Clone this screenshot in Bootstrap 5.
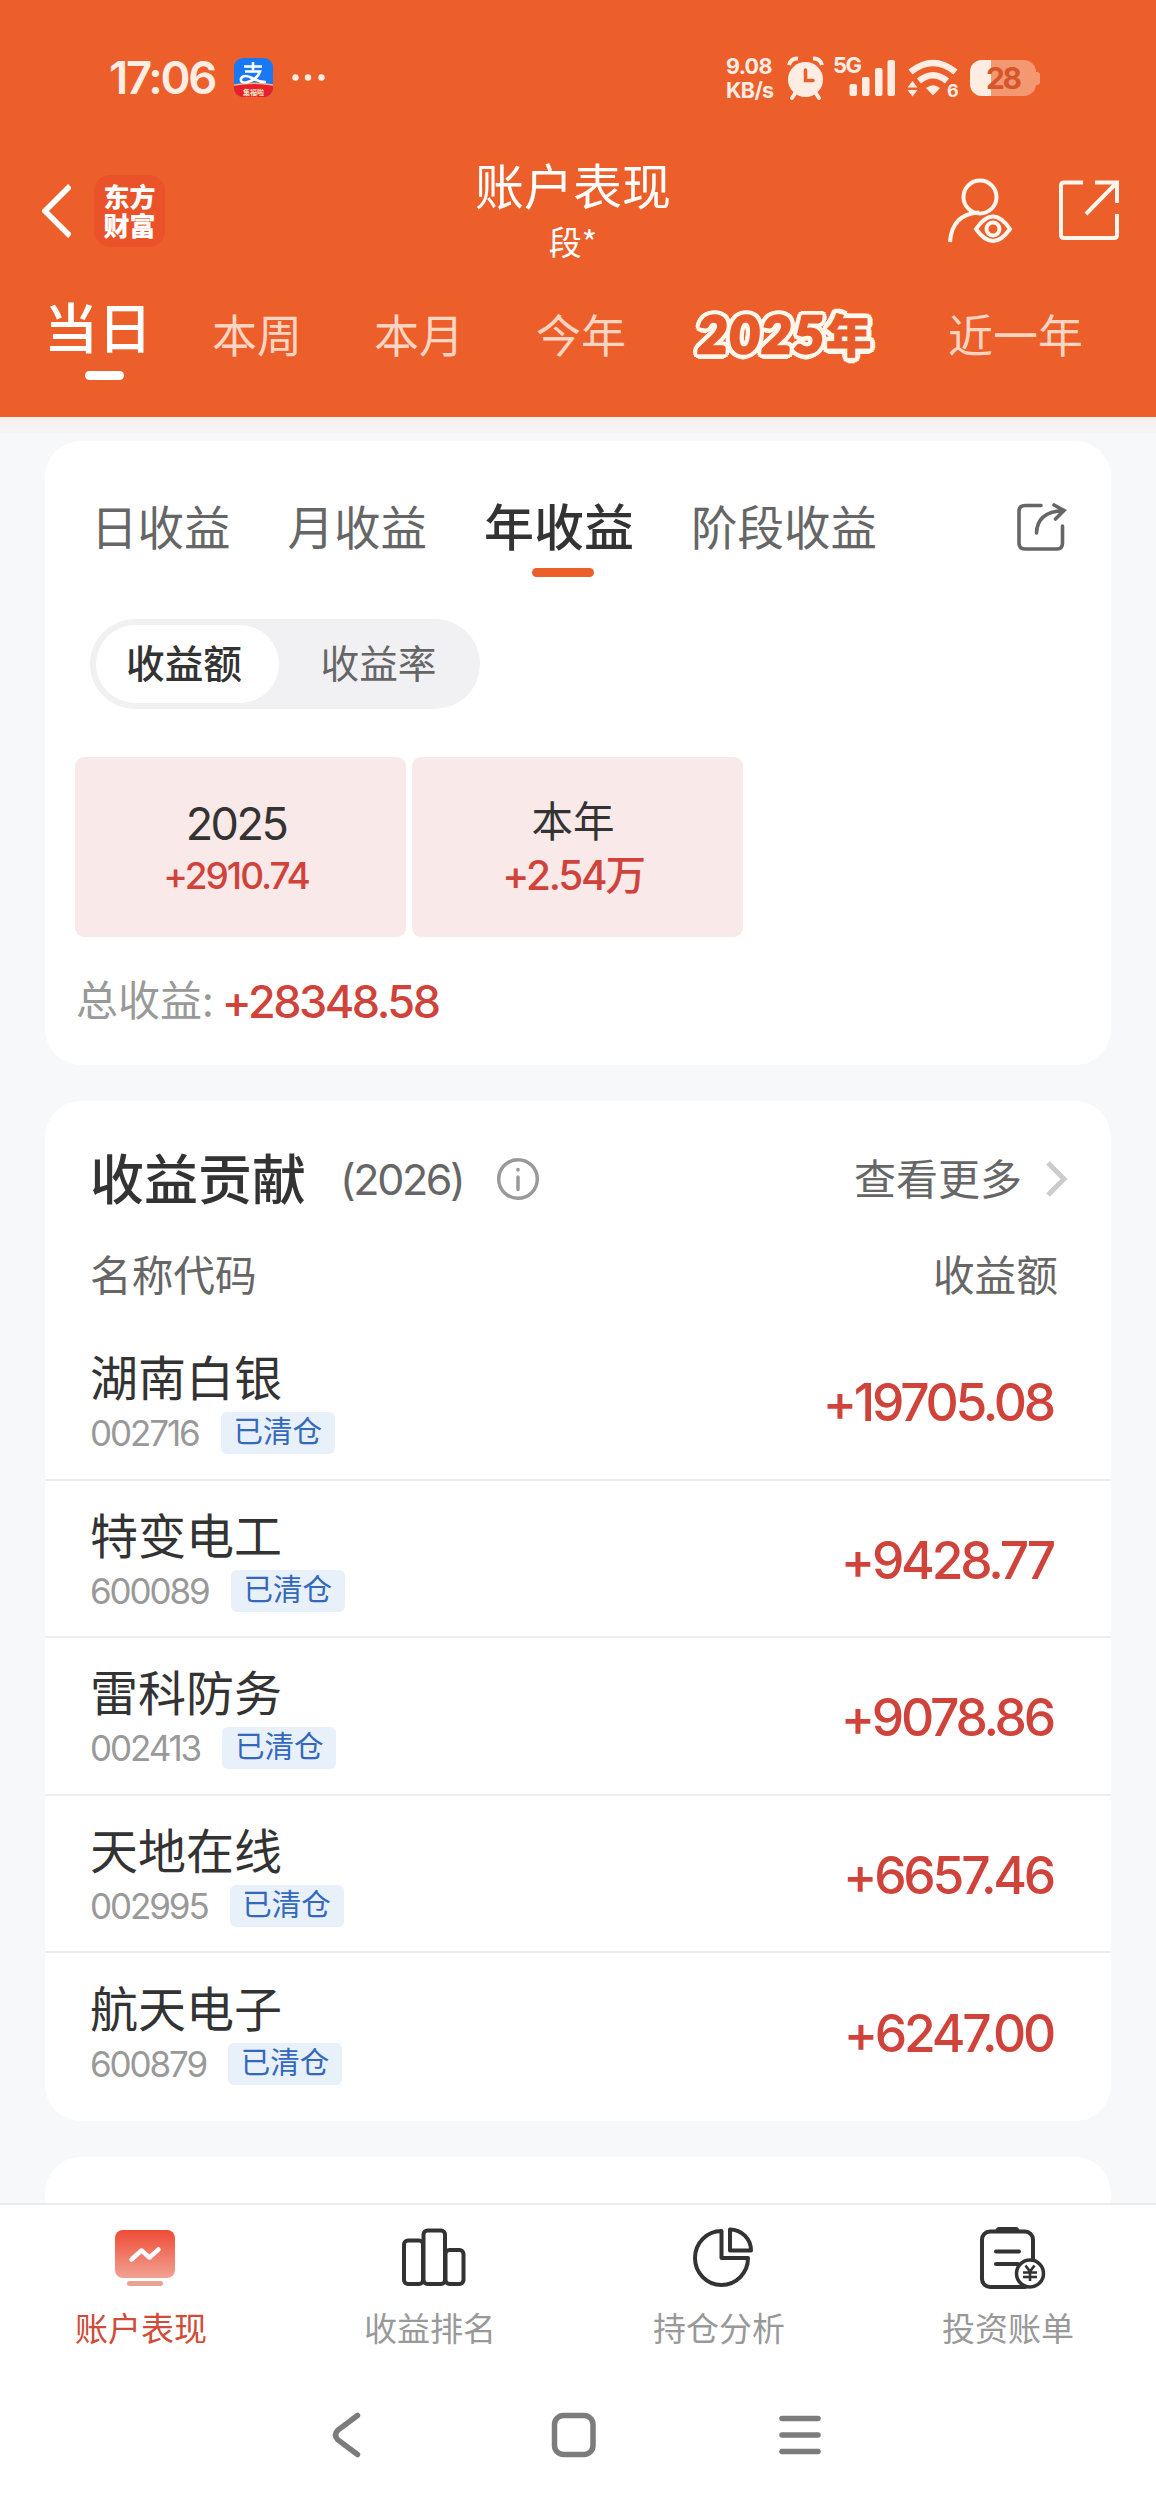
<!DOCTYPE html>
<html lang="zh-CN">
<head>
<meta charset="utf-8">
<meta name="viewport" content="width=device-width, initial-scale=1">
<title>账户表现</title>
<link href="https://cdn.jsdelivr.net/npm/bootstrap@5.3.0/dist/css/bootstrap.min.css" rel="stylesheet">
<style>
  :root { --brand: #ec5f2b; --rise: #d0433b; --ink: #333; --sub: #666; --mute: #999; }
  body { width: 1156px; height: 2510px; overflow: hidden; background: #f6f8fa; color: var(--ink);
    font-family: "Noto Sans CJK SC", sans-serif; line-height: 1; }
  svg { display: block; flex: none; }
  .num { font-family: Inter, "Noto Sans CJK SC", sans-serif; letter-spacing: -.055em; }
  .app-head, .panel { white-space: nowrap; }

  /* header */
  .app-head { height: 417px; background: var(--brand); color: #fff; }
  .status { height: 155px; padding-left: 109px; color: #ffede4; }
  .clock { width: 125px; font-size: 45.5px; font-weight: 600; letter-spacing: -.05em; }
  .speed { width: 61px; margin-left: 397px; font-size: 21.500px; line-height: 24px; font-weight: 700; letter-spacing: -.03em; }
  .title-row { height: 112px; padding-left: 42px; }
  .brand-logo { width: 71px; height: 72px; margin-left: 23px; border-radius: 16px; background: #ea5329;
    font-size: 26px; line-height: 29px; font-weight: 900; padding-bottom: 3px; }
  .page-title { width: 240px; margin-left: 288px; }
  .page-title .main { font-size: 49px; height: 60px; line-height: 53px; }
  .page-title .user { font-size: 33px; line-height: 48px; }
  .period { height: 150px; font-size: 45px; color: #ffd5c2; padding-left: 44px; }
  .period .item { width: 90px; margin-left: 72px; padding-top: 44px; }
  .period .on { width: 111px; font-size: 54px; font-weight: 500; color: #fff; padding-top: 32px; }
  .period .on + .item { margin-left: 57px; }
  .period .on .pill-line { width: 39px; margin: 18px 0 0 41px; }
  .pill-line { height: 9px; border-radius: 5px; }
  .period .sticker { width: 181px; font-size: 45px; font-weight: 900; padding-top: 44px; color: #e95a2a;
    -webkit-text-stroke: 1px #e95a2a;
    text-shadow: 5.500px 0 #fff6ec, -5.500px 0 #fff6ec, 0 5.500px #fff6ec, 0 -5.500px #fff6ec, 4px 4px #fff6ec, -4px 4px #fff6ec, 4px -4px #fff6ec, -4px -4px #fff6ec, 5px 2px #fff6ec, -5px 2px #fff6ec, 5px -2px #fff6ec, -5px -2px #fff6ec, 2px 5px #fff6ec, -2px 5px #fff6ec, 2px -5px #fff6ec, -2px -5px #fff6ec; }
  .sticker span { display: inline-block; font-family: Lato, sans-serif; font-size: 51px; line-height: 43px; letter-spacing: 2.500px; transform: skewX(-4deg); -webkit-text-stroke-width: 2.500px; }
  .period .sticker + .item { margin-left: 69px; }
  .head-fade { height: 16px; background: linear-gradient(#f6efed, #f6f4f4); }

  /* cards */
  .panel { width: 1066px; margin-left: 45px; background: #fff; border-radius: 36px; }
  .p-one { height: 624px; margin-top: 8px; padding: 50px 44px 0 45px; }
  .subtabs { height: 86px; font-size: 46.5px; color: var(--sub); gap: 57px; margin-left: 1px; }
  .subtabs .item { padding-top: 11px; }
  .subtabs .on { font-size: 50px; font-weight: 500; color: var(--ink); padding-top: 8px; }
  .subtabs .on .pill-line { width: 62px; margin: 19px 0 0 48px; background: var(--brand); }
  .switcher { width: 390px; height: 90px; margin-top: 42px; padding: 6px; border-radius: 45px; background: #f1f1f4; font-size: 38.7px; color: var(--sub); }
  .switcher .on { width: 183px; height: 78px; border-radius: 39px; background: #fff; color: var(--ink); font-weight: 500; padding: 0 7px 5px 0; }
  .switcher .off { padding: 0 0 5px 4px; }
  .tiles { margin: 48px 0 0 -15px; gap: 6px; }
  .tile { width: 331px; height: 180px; border-radius: 9px; background: #fae9e9; padding: 37px 9px 0 0; }
  .y-label { font-size: 45px; line-height: 60px; height: 60px; }
  .y-label.zh { font-size: 41.5px; line-height: 50px; }
  .y-val { font-size: 37px; line-height: 44px; color: var(--rise); font-weight: 500; }
  .y-val.big { font-size: 40.500px; }
  .total { margin: 37px 0 0 -14px; height: 48px; font-size: 42px; color: var(--mute); }
  .total .num { font-size: 45px; color: var(--rise); font-weight: 500; margin: 6px 0 0 8px; }

  .p-two { height: 1020px; margin-top: 36px; }
  .sec-head { height: 152px; padding: 0 43px 0 45px; }
  .sec-title { font-size: 54px; font-weight: 500; width: 250px; }
  .sec-year { font-size: 43px; color: var(--sub); padding-top: 4px; }
  .sec-more { font-size: 42px; color: var(--sub); margin: 0 24px 0 auto; }
  .sec-info { margin: 4px 0 0 33px; }
  .sec-arrow { margin-top: 3px; }
  .col-head { height: 70px; padding: 0 53px 0 45px; font-size: 41.7px; color: var(--sub); }
  .stock { height: 157.5px; padding: 0 58px 0 45px; border-bottom: 2px solid #ededed; }
  .stock:last-child { border: 0; }
  .stock .nm { font-size: 48px; line-height: 56px; height: 65px; }
  .stock .cd { font-size: 35px; color: var(--mute); letter-spacing: -.06em; margin-right: 22px; padding-top: 4px; }
  .tagx { width: 114px; height: 42px; border-radius: 6px; background: #e8f0fa; color: #3468bd; font-size: 29.5px; line-height: 35px; text-align: center; }
  .stock .amt { font-size: 51.5px; font-weight: 500; color: var(--rise); padding-top: 4px; letter-spacing: -.063em; }
  .p-three { height: 46px; margin-top: 36px; border-radius: 36px 36px 0 0; }

  /* bottom bars */
  .dock { height: 178px; background: #fff; border-top: 2px solid #ebebeb; font-size: 33px; color: var(--mute); padding-top: 17px; }
  .dock .on { color: #cf4c38; }
  .dock .cap { margin: 19px 7px 0 0; }
  .sysnav { height: 129px; background: #fff; padding: 28px 0 0 328px; }
</style>
</head>
<body>
<header class="app-head">
  <div class="status d-flex align-items-center">
    <div class="clock num">17:06</div>
    <svg width="95" height="40" viewBox="0 0 95 40">
      <defs><clipPath id="pay"><rect width="39" height="39" rx="9"/></clipPath></defs>
      <g clip-path="url(#pay)"><rect width="39" height="39" fill="#1978f5"/><path d="M0 27.500Q20 24 39 27.500V40H0z" fill="#e8202c"/><path d="M0 27Q20 23.500 39 27" fill="none" stroke="#ffb27a" stroke-width="1.300"/></g>
      <path d="M10 8.500H28M19 4V13.500M11 13.500H26Q23 22 12 24.500Q6 25 7 20.500Q10 15.500 19 20.500Q26 24.500 32 24" fill="none" stroke="#fff" stroke-width="2.600"/>
      <text x="19.500" y="36.500" font-size="7" font-weight="700" fill="#ffe9c0" text-anchor="middle">集福啦</text>
      <g fill="#ffede4"><circle cx="61.500" cy="19.500" r="3.200"/><circle cx="74" cy="19.500" r="3.200"/><circle cx="87.500" cy="19.500" r="3.200"/></g>
    </svg>
    <div class="speed num"><div>9.08</div><div>KB/s</div></div>
    <svg width="255" height="66" viewBox="788 44 255 66" fill="#ffede4">
      <circle cx="806.500" cy="78.500" r="17.500"/>
      <path d="M790 64Q792 57 799 57.500M814 57.500Q821 57 823 64" stroke="#ffede4" stroke-width="4" fill="none"/>
      <path d="M797 91L793 97M816 91L820 97" stroke="#ffede4" stroke-width="4" stroke-linecap="round"/>
      <path d="M806.500 69V79.500H814" stroke="#ec5f2b" stroke-width="3.500" fill="none" stroke-linecap="round"/>
      <text x="834" y="72" font-family="Inter" font-weight="700" font-size="22" textLength="29">5G</text>
      <rect x="850.500" y="83" width="7.500" height="12" rx="2"/><rect x="863" y="76" width="7.500" height="19" rx="2"/><rect x="876" y="67" width="7.500" height="28" rx="2"/><rect x="888.500" y="59" width="7.500" height="36" rx="2"/>
      <path d="M911.500 71Q934 53 956.500 71M920 80Q934 68.500 948 80" fill="none" stroke="#ffede4" stroke-width="6.500"/>
      <path d="M927 87Q934 81.500 941 87L934 94.500z"/>
      <path d="M908.500 86.500L913.500 80L918.500 86.500zM908.500 89L913.500 95.500L918.500 89z"/>
      <text x="948" y="96" font-family="Inter" font-weight="700" font-size="18">6</text>
      <path d="M983 59H1025A12 12 0 0 1 1037 71V71C1042 71 1041 73 1041 77S1042 84 1037 84A12 12 0 0 1 1025 95H983A12 12 0 0 1 971 83V71A12 12 0 0 1 983 59z" fill="#f49872"/>
      <path d="M992 59H983A12 12 0 0 0 971 71V83A12 12 0 0 0 983 95H992z"/>
      <text x="987" y="88" font-family="Inter" font-weight="700" font-size="30" textLength="36" fill="#d5562b">28</text>
    </svg>
  </div>

  <div class="title-row d-flex align-items-center">
    <svg width="29" height="56" viewBox="0 0 29 56" fill="none" stroke="#fff" stroke-width="5.500"><path d="M28 3L3 28L28 53"/></svg>
    <div class="brand-logo d-flex flex-column justify-content-center align-items-center"><div>东方</div><div>财富</div></div>
    <div class="page-title text-center">
      <div class="main">账户表现</div>
      <div class="user">段*</div>
    </div>
    <svg class="ms-auto" width="208" height="68" viewBox="948 177 208 68" fill="none" stroke="#fff6ee" stroke-width="4">
      <circle cx="980" cy="197" r="16.500"/><path d="M950 242Q952 214 979 212.500"/>
      <path d="M976 229Q993 204 1010 229Q993 253 976 229z"/><circle cx="993" cy="229" r="6.500"/>
      <path d="M1083 182.500H1064Q1061 182.500 1061 185.500V235Q1061 238 1064 238H1114Q1117 238 1117 235V214M1095 182.500H1117V203M1117 182.500L1086 214"/>
    </svg>
  </div>

  <nav class="period d-flex">
    <div class="on"><div>当日</div><div class="pill-line bg-white"></div></div>
    <div class="item">本周</div><div class="item">本月</div><div class="item">今年</div>
    <div class="item sticker"><span>2025</span>年</div><div class="item">近一年</div>
  </nav>
</header>
<div class="head-fade"></div>

<main>
  <section class="panel p-one">
    <div class="d-flex justify-content-between">
      <nav class="subtabs d-flex align-items-start">
        <div class="item">日收益</div><div class="item">月收益</div>
        <div class="on"><div>年收益</div><div class="pill-line"></div></div>
        <div class="item">阶段收益</div>
      </nav>
      <svg class="mt-2" width="52" height="56" viewBox="1016 499 52 56" fill="none" stroke="#666" stroke-width="3.600" stroke-linecap="round"><path d="M1042 505.500H1026Q1020 505.500 1020 511.500V543Q1020 549 1026 549H1058Q1063.500 549 1063.500 543V526M1037.500 533Q1038 512 1064 510.500M1055 505L1065 510.500L1056.500 519"/></svg>
    </div>
    <div class="switcher d-flex align-items-center">
      <div class="on d-flex align-items-center justify-content-center">收益额</div>
      <div class="off flex-fill text-center">收益率</div>
    </div>
    <div class="tiles d-flex">
      <div class="tile text-center"><div class="num y-label">2025</div><div class="num y-val">+2910.74</div></div>
      <div class="tile text-center"><div class="y-label zh">本年</div><div class="num y-val big">+2.54万</div></div>
    </div>
    <div class="total d-flex align-items-center"><span>总收益:</span><span class="num">+28348.58</span></div>
  </section>

  <section class="panel p-two">
    <div class="sec-head d-flex align-items-center">
      <div class="sec-title">收益贡献</div>
      <div class="num sec-year">(2026)</div>
      <svg class="sec-info" width="44" height="44" viewBox="0 0 44 44" fill="none" stroke="#999" stroke-width="3.500" stroke-linecap="round"><circle cx="22" cy="22" r="19.300"/><path d="M22 20V32.500M22 12.500V13"/></svg>
      <div class="sec-more">查看更多</div>
      <svg class="sec-arrow" width="22" height="36" viewBox="0 0 22 36" fill="none" stroke="#ccc" stroke-width="5"><path d="M2 2L18 18L2 34"/></svg>
    </div>
    <div class="col-head d-flex justify-content-between"><span>名称代码</span><span>收益额</span></div>
    <div class="stocks">
      <div class="stock d-flex justify-content-between align-items-center"><div><div class="nm">湖南白银</div><div class="d-flex"><span class="num cd">002716</span><span class="tagx">已清仓</span></div></div><div class="num amt">+19705.08</div></div>
      <div class="stock d-flex justify-content-between align-items-center"><div><div class="nm">特变电工</div><div class="d-flex"><span class="num cd">600089</span><span class="tagx">已清仓</span></div></div><div class="num amt">+9428.77</div></div>
      <div class="stock d-flex justify-content-between align-items-center"><div><div class="nm">雷科防务</div><div class="d-flex"><span class="num cd">002413</span><span class="tagx">已清仓</span></div></div><div class="num amt">+9078.86</div></div>
      <div class="stock d-flex justify-content-between align-items-center"><div><div class="nm">天地在线</div><div class="d-flex"><span class="num cd">002995</span><span class="tagx">已清仓</span></div></div><div class="num amt">+6657.46</div></div>
      <div class="stock d-flex justify-content-between align-items-center"><div><div class="nm">航天电子</div><div class="d-flex"><span class="num cd">600879</span><span class="tagx">已清仓</span></div></div><div class="num amt">+6247.00</div></div>
    </div>
  </section>
  <section class="panel p-three"></section>
</main>

<nav class="dock row g-0 text-center">
  <div class="col-3 on"><svg class="mx-auto" width="66" height="70" viewBox="112 2222 66 70"><defs><linearGradient id="g" x2="0" y2="1"><stop stop-color="#ee4b34"/><stop offset="1" stop-color="#f1a294"/></linearGradient></defs><rect x="115" y="2230" width="60" height="48" rx="8" fill="url(#g)"/><rect x="127" y="2281" width="36" height="5" rx="2.500" fill="#eba293"/><path d="M131.500 2259.500L141.500 2250.500L149.500 2257.500L158.500 2249.500" fill="none" stroke="#fff" stroke-width="4.500" stroke-linecap="round" stroke-linejoin="round"/></svg><div class="cap">账户表现</div></div>
  <div class="col-3"><svg class="mx-auto" width="68" height="70" viewBox="400 2222 68 70" fill="none" stroke="#333" stroke-width="4"><rect x="404" y="2240.500" width="19" height="43.500" rx="4"/><rect x="423.500" y="2230.500" width="21.500" height="53.500" rx="4"/><rect x="445.500" y="2250" width="18" height="34" rx="4"/></svg><div class="cap">收益排名</div></div>
  <div class="col-3"><svg class="mx-auto" width="66" height="70" viewBox="690 2222 66 70" fill="none" stroke="#333" stroke-width="4" stroke-linejoin="round"><path d="M721.500 2231A26.500 27 0 1 0 748 2258H721.500z"/><path d="M730 2229.500V2250.500H751A21 21 0 0 0 730 2229.500z"/></svg><div class="cap">持仓分析</div></div>
  <div class="col-3"><svg class="mx-auto" width="70" height="70" viewBox="977 2222 70 70" fill="none" stroke="#333" stroke-width="4"><rect x="982" y="2231.500" width="51" height="55.500" rx="8"/><path d="M995 2231.500Q996 2227 999 2227H1016Q1019 2227 1020 2231.500z" fill="#333" stroke="none"/><path d="M996 2251.500H1019M996 2264H1018" stroke-linecap="round"/><circle cx="1030" cy="2273.500" r="13.500" fill="#fff" stroke-width="3.500"/><path d="M1025.500 2265.500L1030 2271.500L1034.500 2265.500M1030 2271V2281M1023 2272.500H1037M1023 2277H1037" stroke-width="2.600"/></svg><div class="cap">投资账单</div></div>
</nav>
<div class="sysnav">
  <svg width="500" height="52" viewBox="328 2409 500 52" fill="none" stroke="#7c7c7c" stroke-width="5.500" stroke-linecap="round"><path d="M357.500 2415.500L338 2430Q333 2435 338 2440L357.500 2454.500"/><rect x="554.500" y="2415.500" width="38.500" height="39" rx="9"/><path d="M782 2418.500H818M782 2435H818M782 2451.500H818"/></svg>
</div>
<script src="https://cdn.jsdelivr.net/npm/bootstrap@5.3.0/dist/js/bootstrap.bundle.min.js"></script>
</body>
</html>
